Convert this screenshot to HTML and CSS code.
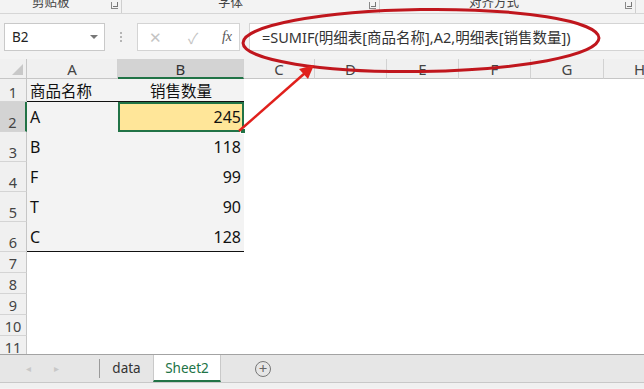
FILE: index.html
```html
<!DOCTYPE html>
<html lang="zh-CN">
<head>
    <meta charset="UTF-8">
    <title>Sheet2</title>
    <link rel="stylesheet" href="styles.css">
</head>
<body>

    <!-- Ribbon group labels -->
    <div class="ribbon">
        <div class="group g1"><span class="label">剪贴板</span><span class="launcher"></span></div>
        <div class="group g2"><span class="label">字体</span><span class="launcher"></span></div>
        <div class="group g3"><span class="label">对齐方式</span><span class="launcher"></span></div>
    </div>

    <!-- Formula bar -->
    <div class="formula-row">
        <div class="name-box">B2<span class="drop"></span></div>
        <div class="grip"><i></i><i></i><i></i></div>
        <div class="fx-box">
            <span class="fx-btn">&#x2715;</span>
            <span class="fx-btn">&#x2713;</span>
            <span class="fx-btn fx">fx</span>
        </div>
        <div class="formula">=SUMIF(明细表[商品名称],A2,明细表[销售数量])</div>
    </div>

    <!-- Sheet grid -->
    <div class="sheet">
        <div class="corner"></div>
        <div class="col-head">A</div>
        <div class="col-head active">B</div>
        <div class="col-head">C</div>
        <div class="col-head">D</div>
        <div class="col-head">E</div>
        <div class="col-head">F</div>
        <div class="col-head">G</div>
        <div class="col-head">H</div>

        <div class="row-head">1</div>
        <div class="cell data head-row">商品名称</div>
        <div class="cell data head-row center">销售数量</div>

        <div class="row-head active">2</div>
        <div class="cell data">A</div>
        <div class="cell data num selected">245<span class="handle"></span></div>

        <div class="row-head">3</div>
        <div class="cell data">B</div>
        <div class="cell data num">118</div>

        <div class="row-head">4</div>
        <div class="cell data">F</div>
        <div class="cell data num">99</div>

        <div class="row-head">5</div>
        <div class="cell data">T</div>
        <div class="cell data num">90</div>

        <div class="row-head">6</div>
        <div class="cell data last">C</div>
        <div class="cell data num last">128</div>

        <div class="row-head">7</div>
        <div class="row-head">8</div>
        <div class="row-head">9</div>
        <div class="row-head">10</div>
        <div class="row-head">11</div>
    </div>

    <!-- Sheet tabs -->
    <div class="tabs">
        <span class="nav">&#x25C2;</span>
        <span class="nav">&#x25B8;</span>
        <span class="tab-sep"></span>
        <span class="tab">data</span>
        <span class="tab current">Sheet2</span>
        <span class="add">+</span>
    </div>
    <div class="status"></div>

    <!-- Annotation: circle round the formula and arrow from B2 -->
    <svg class="markup" width="644" height="389" viewBox="0 0 644 389">
        <ellipse cx="421" cy="40.5" rx="178" ry="31" transform="rotate(-0.8 421 40.5)"
                 fill="none" stroke="#c0161d" stroke-width="3"/>
        <line x1="239" y1="131" x2="305" y2="73" stroke="#e0201c" stroke-width="2.5"/>
        <polygon points="314,65 308,79 299,69" fill="#e0201c"/>
    </svg>

</body>
</html>
```

FILE: styles.css
```css
* {
    margin: 0;
    padding: 0;
    box-sizing: border-box;
}

body {
    width: 644px;
    height: 389px;
    overflow: hidden;
    position: relative;
    background-color: #f3f3f3;
    font-family: "Noto Sans", "Noto Sans CJK SC", sans-serif;
    color: #222;
}

/* Ribbon */
.ribbon {
    display: flex;
    height: 14px;
    border-bottom: 1px solid #d6d6d6;
    overflow: hidden;
}

.group {
    display: flex;
    align-items: flex-start;
    border-right: 1px solid #cfcfcf;
    height: 13px;
}

.g1 { width: 122px; }
.g2 { width: 258px; }
.g3 { width: 256px; }

.label {
    font-size: 12.5px;
    line-height: 12px;
    margin-top: -4px;
    color: #444;
    font-family: "Noto Sans CJK SC", sans-serif;
}

.g1 .label { margin-left: 32px; }
.g2 .label { margin-left: 96px; }
.g3 .label { margin-left: 89px; }

.launcher {
    margin-left: auto;
    margin-right: 3px;
    margin-top: 2px;
    width: 7px;
    height: 7px;
    border-left: 1px solid #888;
    border-bottom: 1px solid #888;
    position: relative;
}

.launcher::after {
    content: "";
    position: absolute;
    left: 1px;
    bottom: 1px;
    width: 4px;
    height: 4px;
    border-right: 1px solid #777;
    border-bottom: 1px solid #777;
}

/* Formula bar */
.formula-row {
    display: flex;
    align-items: center;
    height: 28px;
    margin-top: 9px;
    margin-bottom: 8px;
}

.name-box {
    margin-left: 4px;
    width: 101px;
    height: 28px;
    background: #fff;
    border: 1px solid #c9c9c9;
    font-size: 13.5px;
    line-height: 26px;
    padding-left: 7px;
    position: relative;
}

.drop {
    position: absolute;
    right: 6px;
    top: 11px;
    border-left: 4px solid transparent;
    border-right: 4px solid transparent;
    border-top: 4px solid #777;
}

.grip {
    width: 32px;
    display: flex;
    flex-direction: column;
    align-items: center;
    gap: 2px;
}

.grip i {
    width: 2px;
    height: 2px;
    background: #b5b5b5;
}

.fx-box {
    width: 103px;
    height: 28px;
    background: #fff;
    border: 1px solid #d4d4d4;
    display: flex;
    align-items: center;
    gap: 18px;
    padding-left: 7px;
}

.fx-btn {
    width: 20px;
    text-align: center;
    font-size: 15px;
    color: #c4c4c4;
}

.fx-btn.fx {
    margin-left: -4px;
    font-family: "Liberation Serif", serif;
    font-style: italic;
    color: #555;
    font-size: 14px;
}

.formula {
    margin-left: 9px;
    flex: 1;
    height: 28px;
    background: #fff;
    border: 1px solid #d4d4d4;
    border-right: none;
    font-size: 14.5px;
    line-height: 26px;
    padding-left: 12px;
    white-space: nowrap;
    color: #333;
}

/* Sheet grid */
.sheet {
    display: grid;
    grid-template-columns: 27px 91px 126px 71px 72px 72px 72px 73px 72px;
    grid-template-rows: 20px 23px 30px 30px 30px 30px 30px 21px 21px 21px 21px 21px;
    width: 644px;
    height: 295px;
    overflow: hidden;
    background: #fff;
}

.corner {
    background: #f0f0f0;
    border-right: 1px solid #c6c6c6;
    border-bottom: 1px solid #c6c6c6;
    position: relative;
}

.corner::after {
    content: "";
    position: absolute;
    right: 3px;
    bottom: 3px;
    border-left: 11px solid transparent;
    border-bottom: 11px solid #c8c8c8;
}

.col-head {
    background: #f0f0f0;
    border-right: 1px solid #d2d2d2;
    border-bottom: 1px solid #c6c6c6;
    text-align: center;
    font-size: 15px;
    line-height: 20px;
    color: #444;
}

.col-head.active {
    background: #d3d3d3;
    border-bottom: 2px solid #217346;
    color: #333;
}

.row-head {
    grid-column: 1;
    background: #f0f0f0;
    border-right: 1px solid #c6c6c6;
    border-bottom: 1px solid #d4d4d4;
    font-size: 14.5px;
    color: #444;
    display: flex;
    align-items: flex-end;
    justify-content: center;
    line-height: 18px;
}

.row-head.active {
    background: #d3d3d3;
    border-right: 2px solid #217346;
}

.cell {
    font-size: 16px;
    display: flex;
    align-items: center;
    padding: 0 3px;
    white-space: nowrap;
    color: #111;
}

.data {
    background: #f3f3f3;
}

.head-row {
    border-bottom: 1px solid #111;
    font-family: "Noto Sans CJK SC", sans-serif;
    font-size: 15.5px;
}

.center {
    justify-content: center;
}

.num {
    justify-content: flex-end;
}

.last {
    border-bottom: 1.5px solid #111;
}

.selected {
    background: #ffe699;
    border: 2px solid #217346;
    padding-right: 1px;
    position: relative;
}

.handle {
    position: absolute;
    right: -4px;
    bottom: -4px;
    width: 6px;
    height: 6px;
    background: #217346;
    border: 1px solid #fff;
}

/* Sheet tabs */
.tabs {
    height: 28px;
    background: #e6e6e6;
    border-top: 1px solid #a3a3a3;
    display: flex;
    align-items: stretch;
    font-size: 13.5px;
}

.nav {
    width: 28px;
    text-align: center;
    color: #c8c8c8;
    font-size: 10px;
    line-height: 27px;
}

.nav:first-child {
    margin-left: 14px;
}

.tab-sep {
    width: 1px;
    background: #9a9a9a;
    margin: 4px 0 4px 29px;
}

.tab {
    width: 53px;
    text-align: center;
    line-height: 26px;
    color: #333;
}

.tab.current {
    width: 68px;
    background: #fff;
    color: #217346;
    border-bottom: 2px solid #217346;
    border-left: 1px solid #c9c9c9;
    border-right: 1px solid #c9c9c9;
}

.add {
    margin-left: 34px;
    margin-top: 6px;
    width: 16px;
    height: 16px;
    border: 1px solid #777;
    border-radius: 50%;
    color: #666;
    text-align: center;
    font-size: 15px;
    line-height: 13px;
}

.status {
    height: 6px;
    background: #f0f0f0;
    border-top: 1px solid #c8c8c8;
}

/* Annotation overlay */
.markup {
    position: absolute;
    left: 0;
    top: 0;
    pointer-events: none;
}
```
